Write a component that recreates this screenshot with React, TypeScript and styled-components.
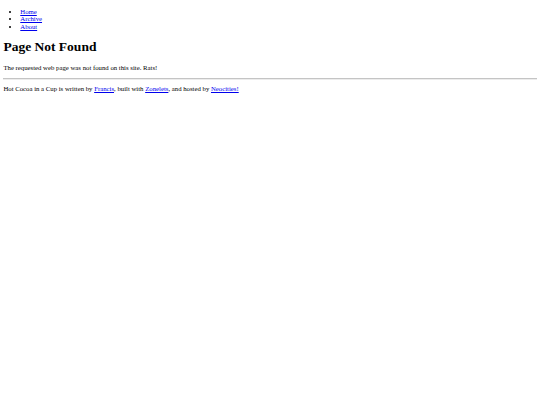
import React from "react";
import styled, { createGlobalStyle } from "styled-components";

// the page is a default-styled document shown at 0.42 scale
const GlobalStyle = createGlobalStyle`
  body {
    margin: 3.4px;
    font-family: "Liberation Serif", "Times New Roman", serif;
    font-size: 6.75px;
    color: #000;
    background: #fff;
  }
`;

const Nav = styled.ul`
  margin: 4.2px 0 6.75px;
  padding-left: 16.9px;
  list-style: disc;
  line-height: 7.6px;
`;

const NavItem = styled.li``;

const Link = styled.a`
  color: #0000ee;
  text-decoration: underline;
`;

const Title = styled.h1`
  font-size: 13.5px;
  font-weight: bold;
  margin: 9px 0;
`;

const Text = styled.p`
  margin: 6.75px 0;
`;

const Footer = styled.p`
  margin: 5.2px 0;
`;

const Rule = styled.hr`
  margin: 3.4px 0;
  border: none;
  border-top: 1px solid #c4c4c4;
  border-bottom: 1px solid #ececec;
`;

export default function App() {
  return (
    <>
      <GlobalStyle />
      <Nav>
        <NavItem>
          <Link href="#">Home</Link>
        </NavItem>
        <NavItem>
          <Link href="#">Archive</Link>
        </NavItem>
        <NavItem>
          <Link href="#">About</Link>
        </NavItem>
      </Nav>
      <Title>Page Not Found</Title>
      <Text>The requested web page was not found on this site. Rats!</Text>
      <Rule />
      <Footer>
        Hot Cocoa in a Cup is written by <Link href="#">Francis</Link>, built
        with <Link href="#">Zonelets</Link>, and hosted by{" "}
        <Link href="#">Neocities!</Link>
      </Footer>
    </>
  );
}
